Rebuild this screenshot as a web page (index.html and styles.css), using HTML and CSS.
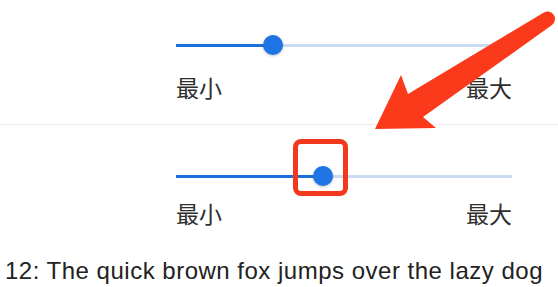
FILE: index.html
```html
<!DOCTYPE html>
<html lang="zh">
<head>
<meta charset="utf-8">
<title>Slider</title>
<link rel="stylesheet" href="styles.css">
</head>
<body>
<div class="page">
  <section class="row row-first">
    <div class="slider">
      <div class="track">
        <div class="fill" style="width:97px"></div>
        <div class="thumb"></div>
        <div class="rest"></div>
      </div>
      <div class="labels"><span>最小</span><span>最大</span></div>
    </div>
  </section>
  <div class="divider"></div>
  <section class="row row-second">
    <div class="slider">
      <div class="track">
        <div class="fill" style="width:147px"></div>
        <div class="thumb"></div>
        <div class="rest"></div>
        <div class="highlight"></div>
      </div>
      <div class="labels"><span>最小</span><span>最大</span></div>
    </div>
  </section>
  <p class="caption">12: The quick brown fox jumps over the lazy dog</p>
  <svg class="arrow" width="558" height="287" viewBox="0 0 558 287" aria-hidden="true">
    <path d="M375,129 L401,75 L408,94 L543,13 A6.5,6.5 0 0 1 552,25 L423,117 L436,128 Z" fill="#fb3a1c"/>
  </svg>
</div>
</body>
</html>
```
FILE: styles.css
```css
html, body {
  margin: 0;
  padding: 0;
  background: #ffffff;
}
.page {
  position: relative;
  width: 558px;
  height: 287px;
  overflow: hidden;
  font-family: "Noto Sans CJK SC", "Liberation Sans", sans-serif;
}
.row-first {
  padding-top: 35px;
  padding-bottom: 26px;
}
.row-second {
  padding-top: 41px;
}
.slider {
  margin-left: 176px;
  width: 336px;
}
.track {
  position: relative;
  display: flex;
  align-items: center;
  height: 20px;
}
.fill {
  height: 3px;
  background: #1b6fdc;
}
.rest {
  flex: 1;
  height: 3px;
  background: #c9dcf3;
}
.thumb {
  position: relative;
  z-index: 1;
  width: 20px;
  height: 20px;
  margin: 0 -10px;
  border-radius: 50%;
  background: #1f74e4;
  box-shadow: 0 1px 3px rgba(0, 0, 0, 0.25);
}
.labels {
  display: flex;
  justify-content: space-between;
  font-size: 23px;
  line-height: 22px;
  color: #2e2e2e;
}
.row-first .labels {
  margin-top: 21px;
}
.row-second .labels {
  margin-top: 16px;
}
.divider {
  height: 1px;
  background: #ececec;
}
.highlight {
  position: absolute;
  left: 117px;
  top: -27px;
  width: 45px;
  height: 47px;
  border: 5px solid #f2391d;
  border-radius: 8px;
  z-index: 2;
}
.caption {
  margin: 32px 0 0 5px;
  font-family: "Liberation Sans", Arial, sans-serif;
  font-size: 24px;
  line-height: 30px;
  letter-spacing: 0.5px;
  color: #222222;
  white-space: nowrap;
}
.arrow {
  position: absolute;
  left: 0;
  top: 0;
  pointer-events: none;
}
```
